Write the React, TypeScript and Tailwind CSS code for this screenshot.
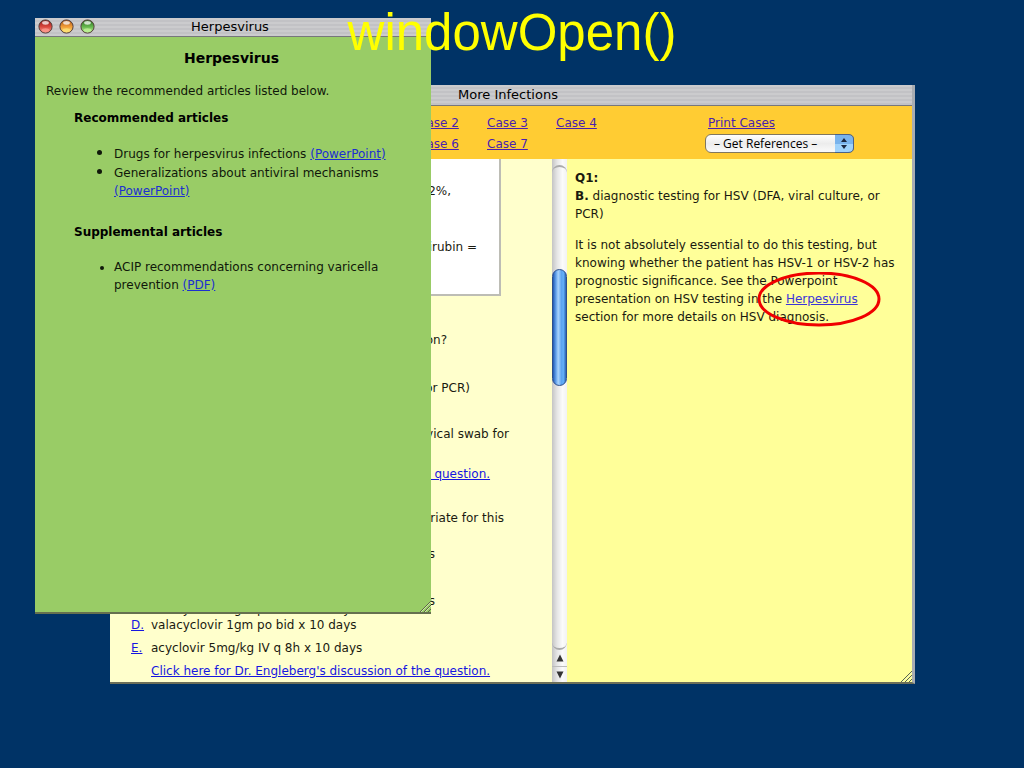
import { ReactNode } from "react";
import clsx from "clsx";

const ARTICLE_LINK = "text-[#1c2fd0] underline";

const caseLinks = [
  ["Case 2", "Case 3", "Case 4"],
  ["Case 6", "Case 7"],
];

function TitleBar({ title, height, children }: { title: string; height: string; children?: ReactNode }) {
  return (
    <header
      className={clsx(
        "relative flex shrink-0 items-center justify-center border-b border-[#77777b] bg-[repeating-linear-gradient(#cbcbcd_0px,#cbcbcd_2px,#c2c2c5_2px,#c2c2c5_4px)] pr-1.5 text-[13px]/4 text-black",
        height
      )}
    >
      {children}
      <h2>{title}</h2>
    </header>
  );
}

function Light({ id, label, dark, mid, glow }: { id: string; label: string; dark: string; mid: string; glow: string }) {
  return (
    <button type="button" aria-label={label} className="block">
      <svg width="15" height="15" viewBox="0 0 15 15">
        <defs>
          <linearGradient id={id} x1="0" y1="0" x2="0" y2="1">
            <stop offset="0" stopColor={dark} />
            <stop offset="0.5" stopColor={mid} />
            <stop offset="1" stopColor={glow} />
          </linearGradient>
        </defs>
        <circle cx="7.5" cy="7.5" r="6.6" fill={`url(#${id})`} stroke="#55403c" strokeWidth="1" />
        <ellipse cx="7.5" cy="3.8" rx="3.4" ry="1.9" fill="#fff" opacity="0.75" />
        <ellipse cx="7.5" cy="11" rx="3.8" ry="1.8" fill={glow} opacity="0.7" />
      </svg>
    </button>
  );
}

function Grip() {
  return (
    <svg className="absolute right-0 bottom-0" width="12" height="12" viewBox="0 0 12 12">
      <path d="M1 12L12 1M5 12L12 5M9 12L12 9" stroke="#5d6844" strokeWidth="1" fill="none" />
      <path d="M2 12L12 2M6 12L12 6" stroke="#e4eec8" strokeWidth="0.7" fill="none" />
    </svg>
  );
}

function ScrollBar() {
  return (
    <div className="flex w-[15px] shrink-0 flex-col bg-[linear-gradient(90deg,#c4c4c4,#e6e6e6_35%,#fbfbfb_70%,#f2f2f2)]">
      <div className="mt-1.5 h-4 rounded-t-full border-t-2 border-[#aaaaaa]" />
      <div className="mt-[88px] h-[117px] rounded-full border border-[#2c4f8c] bg-[linear-gradient(90deg,#1f58b4,#6aa8ee_25%,#a9d3fb_40%,#5ba3f0_65%,#63b0f8_80%,#2b62b0)]" />
      <div className="flex-1 rounded-b-full border-b-2 border-[#aaaaaa]" />
      <button type="button" aria-label="Scroll up" className="flex h-4 items-center justify-center">
        <svg width="8" height="8" viewBox="0 0 8 8">
          <path d="M4 0.500L7.500 7.500H0.500z" fill="#333" />
        </svg>
      </button>
      <button
        type="button"
        aria-label="Scroll down"
        className="flex h-4 items-center justify-center border-t border-[#bbbbbb]"
      >
        <svg width="8" height="8" viewBox="0 0 8 8">
          <path d="M4 7.500L0.500 0.500H7.500z" fill="#333" />
        </svg>
      </button>
    </div>
  );
}

function CasePanel() {
  return (
    <div className="min-w-0 flex-1 bg-[#ffffcc] text-right text-xs/4">
      <div className="mr-[51px] h-[137px] border-r-2 border-b-2 border-[#bdbdb5] bg-white pt-6">
        <p className="pr-12">2%,</p>
        <p className="mt-10 pr-[22px]">bilirubin =</p>
      </div>
      <p className="mt-9 pr-[105px]">infection?</p>
      <p className="mt-8 pr-[82px]">or PCR)</p>
      <p className="mt-[30px] pr-[43px]">cervical swab for</p>
      <p className="mt-6 pl-[41px] text-left">
        <a href="#discussion-1" className="text-[#1616e0] underline">
          Click here for Dr. Engleberg's discussion of the question.
        </a>
      </p>
      <p className="mt-7 pr-12">appropriate for this</p>
      <p className="mt-5 pr-[117px]">days</p>
      <p className="mt-[31px] pr-[117px]">days</p>
      <div className="-mt-2 grid grid-cols-[20px_1fr] pl-[21px] text-left">
        <span className="pl-1.5">C.</span>
        <span>valacyclovir 1gm po bid x 10 days</span>
      </div>
      <div className="grid grid-cols-[20px_1fr] pl-[21px] text-left">
        <a href="#d" className="text-[#1616e0] underline">D.</a>
        <span>valacyclovir 1gm po bid x 10 days</span>
      </div>
      <div className="mt-[7px] grid grid-cols-[20px_1fr] pl-[21px] text-left">
        <a href="#e" className="text-[#1616e0] underline">E.</a>
        <span>acyclovir 5mg/kg IV q 8h x 10 days</span>
      </div>
      <p className="mt-[7px] pl-[41px] text-left">
        <a href="#discussion-2" className="text-[#1616e0] underline">
          Click here for Dr. Engleberg's discussion of the question.
        </a>
      </p>
    </div>
  );
}

function AnswerPanel() {
  return (
    <div className="w-[345px] shrink-0 bg-[#ffff99] pt-2.5 pl-2 text-xs/[18px] whitespace-nowrap">
      <p className="font-bold">Q1:</p>
      <p>
        <b>B.</b> diagnostic testing for HSV (DFA, viral culture, or
        <br />
        PCR)
      </p>
      <p className="mt-[13px]">
        It is not absolutely essential to do this testing, but
        <br />
        knowing whether the patient has HSV-1 or HSV-2 has
        <br />
        prognostic significance. See the Powerpoint
        <br />
        presentation on HSV testing in the{" "}
        <span className="relative">
          <a href="#herpesvirus" className="text-[#3b35d8] underline">
            Herpesvirus
          </a>
          <svg
            className="pointer-events-none absolute -top-5 -left-[29px]"
            width="124"
            height="56"
            viewBox="0 0 124 56"
          >
            <ellipse cx="62" cy="27" rx="60" ry="26" fill="none" stroke="#f00000" strokeWidth="3" />
          </svg>
        </span>
        <br />
        section for more details on HSV diagnosis.
      </p>
    </div>
  );
}

function MoreInfections() {
  return (
    <section className="absolute top-[85px] left-[110px] flex h-[599px] w-[805px] flex-col border-r-[3px] border-b-2 border-r-[#a9adb2] border-b-[#6c6f58]">
      <TitleBar title="More Infections" height="h-[21px]" />
      <nav className="flex h-[53px] shrink-0 bg-[#ffcc33] pt-[7px] text-xs/5 text-[#4a1fb0]">
        <div className="ml-[308px] w-[290px]">
          {caseLinks.map((row) => (
            <div key={row[0]} className="grid h-[21px] grid-cols-[69px_69px_69px]">
              {row.map((name) => (
                <a key={name} href={"#" + name} className="underline">
                  {name}
                </a>
              ))}
            </div>
          ))}
        </div>
        <div>
          <a href="#print" className="block h-[21px] underline">
            Print Cases
          </a>
          <div className="relative -ml-[3px]">
            <select
              aria-label="Get References"
              className="block h-[19px] w-[149px] appearance-none rounded-md border border-[#80775f] bg-[linear-gradient(#ffffff,#ececec_50%,#fafafa)] pl-2 font-['Open_Sans',sans-serif] text-xs/4 font-medium text-black"
            >
              <option>– Get References –</option>
            </select>
            <svg className="pointer-events-none absolute top-0 right-0" width="19" height="19" viewBox="0 0 19 19">
              <path d="M0 1H14Q18 1 18 5V14Q18 18 14 18H0z" fill="#79b3ec" />
              <path d="M0 10H18V14Q18 18 14 18H0z" fill="#9fd2fb" />
              <path d="M0 .5H13Q18.500 .5 18.500 5V14Q18.500 18.500 13 18.500H0" fill="none" stroke="#4a6288" />
              <path d="M9 4L12 8H6zM9 15L6 11H12z" fill="#1c2740" />
            </svg>
          </div>
        </div>
      </nav>
      <div className="flex min-h-0 flex-1">
        <CasePanel />
        <ScrollBar />
        <AnswerPanel />
      </div>
      <Grip />
    </section>
  );
}

function Herpesvirus() {
  return (
    <section className="absolute top-[18px] left-[35px] flex h-[596px] w-[396px] flex-col border-b-2 border-[#66704f] bg-[#99cc66] text-xs/[18px] text-[#10180a]">
      <TitleBar title="Herpesvirus" height="h-[19px]">
        <div className="absolute top-px left-[3px] flex gap-1.5">
          <Light id="close" label="Close" dark="#8a1a1a" mid="#d8453c" glow="#ff9c90" />
          <Light id="minimize" label="Minimize" dark="#a4521a" mid="#f09a34" glow="#ffe678" />
          <Light id="zoom" label="Zoom" dark="#2c6a20" mid="#62b44a" glow="#c4f59a" />
        </div>
      </TitleBar>
      <div className="pt-3 pl-[11px]">
        <h3 className="pr-3.5 text-center text-sm/[18px] font-bold text-black">Herpesvirus</h3>
        <p className="mt-[15px]">Review the recommended articles listed below.</p>
        <div className="pl-7">
          <h4 className="mt-[9px] font-bold text-black">Recommended articles</h4>
          <ul className="mt-[17px] list-disc pl-10 whitespace-nowrap marker:text-base/[18px]">
            <li>
              Drugs for herpesvirus infections{" "}
              <a href="#drugs" className={ARTICLE_LINK}>(PowerPoint)</a>
            </li>
            <li>
              Generalizations about antiviral mechanisms
              <br />
              <a href="#antiviral" className={ARTICLE_LINK}>(PowerPoint)</a>
            </li>
          </ul>
          <h4 className="mt-[23px] font-bold text-black">Supplemental articles</h4>
          <ul className="mt-[17px] list-disc pl-10 whitespace-nowrap">
            <li>
              ACIP recommendations concerning varicella
              <br />
              prevention <a href="#acip" className={ARTICLE_LINK}>(PDF)</a>
            </li>
          </ul>
        </div>
      </div>
      <Grip />
    </section>
  );
}

export default function App() {
  return (
    <main className="relative min-h-screen overflow-hidden bg-[#003366] font-['DejaVu_Sans',Verdana,sans-serif] text-[#1a1a10]">
      <MoreInfections />
      <Herpesvirus />
      <h1 className="relative text-center font-['Liberation_Sans',Arial,sans-serif] text-[51px]/[66px] text-[#ffff00]">
        windowOpen()
      </h1>
    </main>
  );
}
